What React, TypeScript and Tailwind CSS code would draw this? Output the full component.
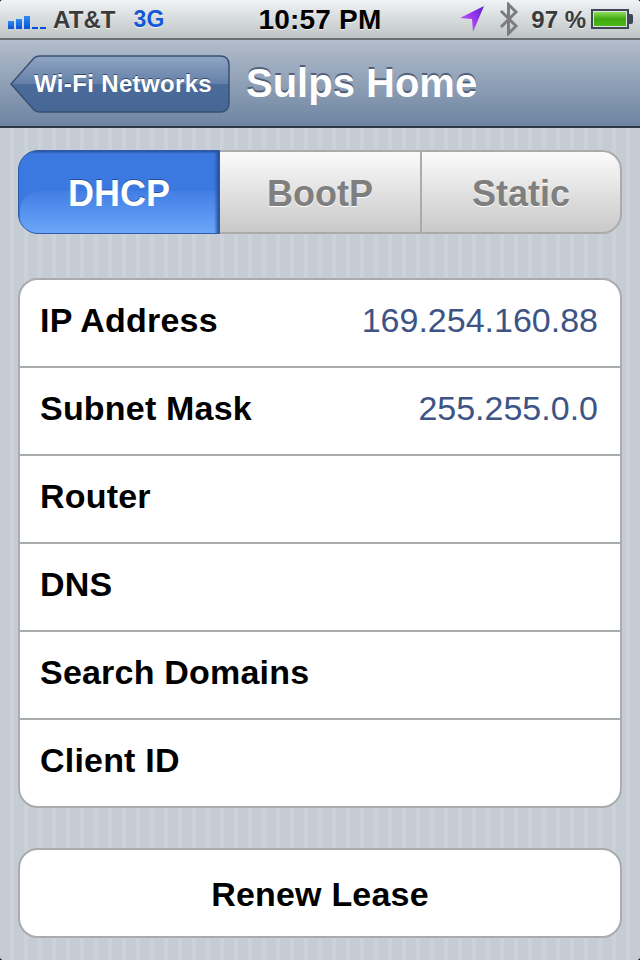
const rows = [
  { label: 'IP Address', value: '169.254.160.88' },
  { label: 'Subnet Mask', value: '255.255.0.0' },
  { label: 'Router', value: '' },
  { label: 'DNS', value: '' },
  { label: 'Search Domains', value: '' },
  { label: 'Client ID', value: '' },
];

function SignalBars() {
  return (
    <div className="flex items-end gap-[2px] h-[16px] mt-[2px]">
      <div className="w-[6px] h-[8px] bg-gradient-to-b from-[#2f8cf0] to-[#0b50d8]" />
      <div className="w-[6px] h-[10px] bg-gradient-to-b from-[#2f8cf0] to-[#0b50d8]" />
      <div className="w-[6px] h-[13px] bg-gradient-to-b from-[#2f8cf0] to-[#0b50d8]" />
      <div className="w-[6px] h-[2px] bg-[#0b50d8]" />
      <div className="w-[6px] h-[2px] bg-[#0b50d8]" />
    </div>
  );
}

function LocationArrow() {
  return (
    <svg width="26" height="28" viewBox="0 0 26 28">
      <defs>
        <linearGradient id="loc" x1="1" y1="0" x2="0" y2="1">
          <stop offset="0" stopColor="#5b1fc8" />
          <stop offset="0.5" stopColor="#a03cf0" />
          <stop offset="1" stopColor="#c87cf8" />
        </linearGradient>
      </defs>
      <path d="M25 1 L1 13 L13 14 L14 27 Z" fill="url(#loc)" />
    </svg>
  );
}

function Bluetooth() {
  return (
    <svg width="20" height="34" viewBox="0 0 20 34" fill="none">
      <path d="M2 9 L17 24 L9.5 31.5 V2.5 L17 10 L2 25" stroke="#7c7c7c" strokeWidth="3" />
    </svg>
  );
}

function Battery() {
  return (
    <div className="flex items-center">
      <div className="w-[38px] h-[20px] border-2 border-[#3d4654] p-[1px] bg-[#dfe3e4]">
        <div className="h-full w-full bg-gradient-to-b from-[#8ade52] via-[#3fa80c] to-[#4cb81a]" />
      </div>
      <div className="w-[4px] h-[10px] bg-[#3d4654] rounded-r-[2px]" />
    </div>
  );
}

export default function App() {
  return (
    <div className="w-[640px] h-[960px] bg-black">
      <div className="h-full rounded-[3px] overflow-hidden font-['Liberation_Sans',Arial,sans-serif] bg-[repeating-linear-gradient(90deg,#c5ccd4_0,#c5ccd4_10px,#cbd2d9_10px,#cbd2d9_14px)]">
        <div className="h-[40px] pl-[8px] pr-[7px] flex items-center bg-gradient-to-b from-[#eff3f5] to-[#bfc4c5] border-b-2 border-[#6b6f72] [text-shadow:0_1px_0_rgba(255,255,255,0.7)]">
          <div className="flex items-center w-[247px] mt-[1px]">
            <SignalBars />
            <span className="ml-[7px] text-[24px] font-bold text-[#3a3a3a] tracking-[0.1px]">AT&amp;T</span>
            <span className="ml-[18px] text-[23px] font-bold text-[#1458d8]">3G</span>
          </div>
          <span className="w-[130px] mt-[1px] text-center text-[28px] font-bold text-black whitespace-nowrap tracking-[0.2px]">10:57 PM</span>
          <div className="ml-auto flex items-center">
            <LocationArrow />
            <div className="ml-[14px]"><Bluetooth /></div>
            <span className="ml-[12px] mr-[5px] mt-[1px] text-[24px] font-bold text-[#3a3a3a] whitespace-nowrap">97 %</span>
            <Battery />
          </div>
        </div>

        <div className="h-[88px] flex items-center pl-[10px] bg-gradient-to-b from-[#b3bdcb] to-[#6d84a2] border-b-2 border-[#2d3642]">
          <div className="relative h-[58px] w-[220px] mb-[-2px] flex items-center">
            <svg className="absolute inset-0" width="220" height="58" viewBox="0 0 220 58">
              <defs>
                <linearGradient id="back" x1="0" y1="0" x2="0" y2="1">
                  <stop offset="0" stopColor="#8fa5c3" />
                  <stop offset="0.5" stopColor="#6480a8" />
                  <stop offset="0.5" stopColor="#4b6c9b" />
                  <stop offset="1" stopColor="#466796" />
                </linearGradient>
              </defs>
              <path d="M1 29 L24 3 Q26 1 30 1 L210 1 Q219 1 219 10 L219 48 Q219 57 210 57 L30 57 Q26 57 24 55 Z" fill="url(#back)" stroke="#3a5072" strokeWidth="1.5" />
            </svg>
            <span className="relative ml-[24px] text-[24px] font-bold text-white tracking-[0.35px] whitespace-nowrap [text-shadow:0_-1px_0_rgba(30,45,70,0.7)]">Wi-Fi Networks</span>
          </div>
          <span className="ml-[16px] text-[40px] font-bold text-white whitespace-nowrap [text-shadow:0_-2px_0_rgba(50,65,90,0.7)]">Sulps Home</span>
        </div>

        <div className="px-[18px] pt-[22px]">
          <div className="flex h-[84px]">
            <div className="relative overflow-hidden w-[202px] pt-[3px] rounded-l-[20px] border border-[#2c5aa8] bg-[#3b78e0] flex items-center justify-center text-[36px] font-bold text-white [text-shadow:0_-1px_0_rgba(30,60,120,0.7)]">
              <div className="absolute left-[1px] right-0 bottom-0 h-[42px] rounded-tl-[20px] bg-gradient-to-b from-[#427ee4] to-[#6ca6fa]" />
              <div className="absolute inset-x-0 top-0 h-[3px] bg-gradient-to-b from-[#2a559f] to-transparent" />
              <div className="absolute inset-y-0 right-0 w-[5px] bg-gradient-to-r from-transparent to-[#25509c]" />
              <span className="relative">DHCP</span>
            </div>
            <div className="w-[202px] pt-[3px] border-y-2 border-r-2 border-[#ababab] bg-gradient-to-b from-[#fbfbfb] to-[#c9c9c9] flex items-center justify-center text-[36px] font-bold text-[#7f7f7f] [text-shadow:0_1px_0_#fff]">
              BootP
            </div>
            <div className="flex-1 pt-[3px] rounded-r-[20px] border-y-2 border-r-2 border-[#ababab] bg-gradient-to-b from-[#fbfbfb] to-[#c9c9c9] flex items-center justify-center text-[36px] font-bold text-[#7f7f7f] [text-shadow:0_1px_0_#fff]">
              Static
            </div>
          </div>

          <div className="mt-[44px] rounded-[20px] border-2 border-[#a9abae] bg-white">
            {rows.map((row, i) => (
              <div
                key={row.label}
                className={`pl-[20px] pr-[22px] pb-[6px] flex items-center justify-between ${i < rows.length - 1 ? 'h-[88px] border-b-2 border-[#a9abae]' : 'h-[86px]'}`}
              >
                <span className="text-[34px] font-bold text-black whitespace-nowrap tracking-[0.2px]">{row.label}</span>
                <span className="text-[34px] text-[#3d5485] whitespace-nowrap">{row.value}</span>
              </div>
            ))}
          </div>

          <div className="mt-[40px] h-[90px] pt-[2px] rounded-[20px] border-2 border-[#a9abae] bg-white flex items-center justify-center text-[34px] font-bold text-black tracking-[0.2px]">
            Renew Lease
          </div>
        </div>
      </div>
    </div>
  );
}
